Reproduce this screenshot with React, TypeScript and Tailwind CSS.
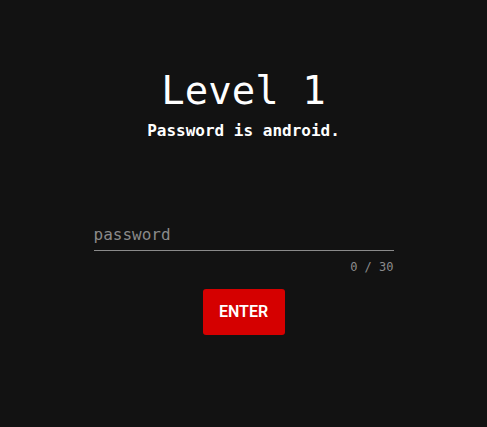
import React, { useState } from 'react'

export default function App() {
  const [value, setValue] = useState('')
  const mono = { fontFamily: '"DejaVu Sans Mono", monospace' }

  return (
    <div className="min-h-screen w-full bg-[#121212] text-white flex flex-col items-center" style={mono}>
      <h1 className="mt-[67px] text-[39px] leading-[48px] text-white">Level 1</h1>
      <p className="mt-[6px] text-[16px] leading-[20px] font-bold text-white">Password is android.</p>

      <div className="mt-[81px] w-[300px]">
        <input
          value={value}
          onChange={(e) => setValue(e.target.value.slice(0, 30))}
          placeholder="password"
          className="w-full bg-transparent border-b border-[#8a8a8a] pb-[3px] pt-[1px] text-[16px] leading-[24px] text-white placeholder:text-[#8a8a8a] outline-none"
          style={mono}
        />
        <div className="mt-[8px] text-right text-[12px] leading-[16px] text-[#8c8c8c]">{value.length} / 30</div>
      </div>

      <button
        className="mt-[14px] w-[82px] h-[46px] rounded-[3px] bg-[#d50000] text-white text-[16px] font-semibold"
        style={{ fontFamily: 'Roboto, sans-serif' }}
      >
        ENTER
      </button>
    </div>
  )
}
